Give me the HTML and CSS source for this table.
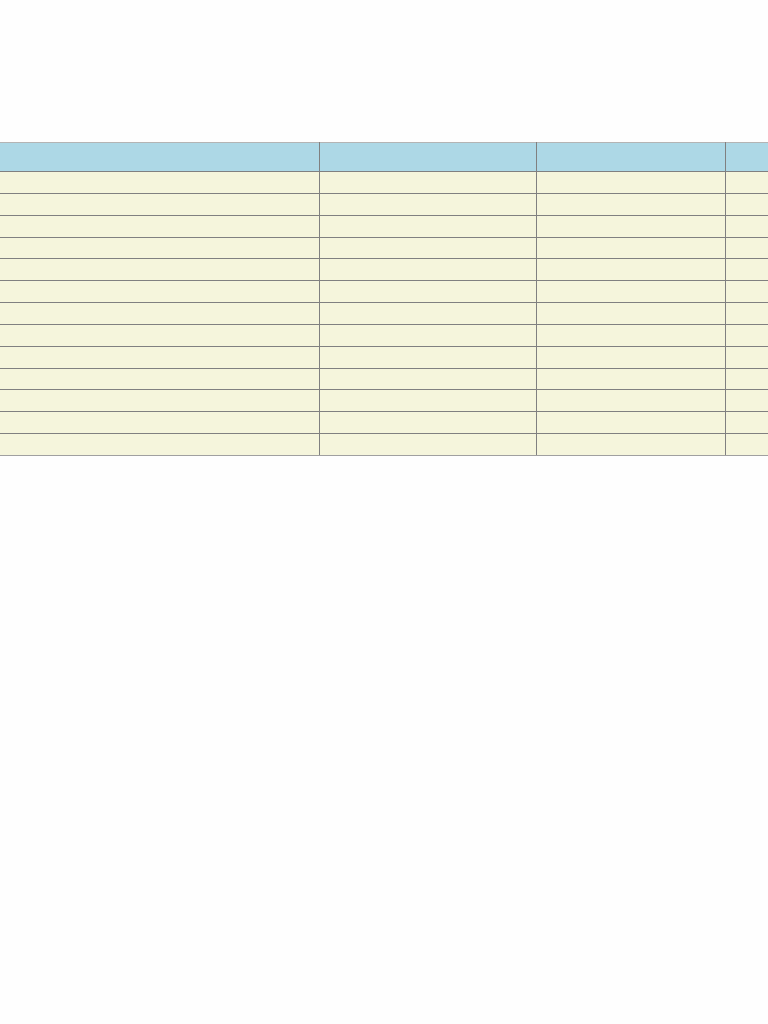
FILE: index.html
```html
<!DOCTYPE html>
<html lang="en">
<head>
<meta charset="utf-8">
<title>Table</title>
<link rel="stylesheet" href="styles.css">
</head>
<body>
<div class="page">
  <div class="table-wrap">
    <table class="grid">
      <colgroup>
        <col class="c1"><col class="c2"><col class="c3"><col class="c4">
      </colgroup>
      <thead>
        <tr><th></th><th></th><th></th><th></th></tr>
      </thead>
      <tbody>
        <tr><td></td><td></td><td></td><td></td></tr>
        <tr><td></td><td></td><td></td><td></td></tr>
        <tr><td></td><td></td><td></td><td></td></tr>
        <tr><td></td><td></td><td></td><td></td></tr>
        <tr><td></td><td></td><td></td><td></td></tr>
        <tr><td></td><td></td><td></td><td></td></tr>
        <tr><td></td><td></td><td></td><td></td></tr>
        <tr><td></td><td></td><td></td><td></td></tr>
        <tr><td></td><td></td><td></td><td></td></tr>
        <tr><td></td><td></td><td></td><td></td></tr>
        <tr><td></td><td></td><td></td><td></td></tr>
        <tr><td></td><td></td><td></td><td></td></tr>
        <tr><td></td><td></td><td></td><td></td></tr>
      </tbody>
    </table>
  </div>
</div>
</body>
</html>
```

FILE: styles.css
```css
html, body {
  margin: 0;
  padding: 0;
  background: #fefefe;
  font-family: "Liberation Sans", Arial, sans-serif;
}

.page {
  padding-top: 142px;
}

.table-wrap {
  width: 768px;
  overflow: hidden;
}

.grid {
  border-collapse: collapse;
  table-layout: fixed;
  width: 900px;
  margin-left: -1px;
}

.c1 { width: 320px; }
.c2 { width: 217px; }
.c3 { width: 189px; }
.c4 { width: 174px; }

.grid th,
.grid td {
  padding: 0;
  border: 1px solid #808080;
}

.grid th {
  height: 28px;
  background: #add8e6;
  border-top-color: #b4b4b4;
}

.grid td {
  height: 20.85px;
  background: #f5f5dc;
}

.grid tbody tr:last-child td {
  border-bottom-color: #a0a0a0;
}
```
